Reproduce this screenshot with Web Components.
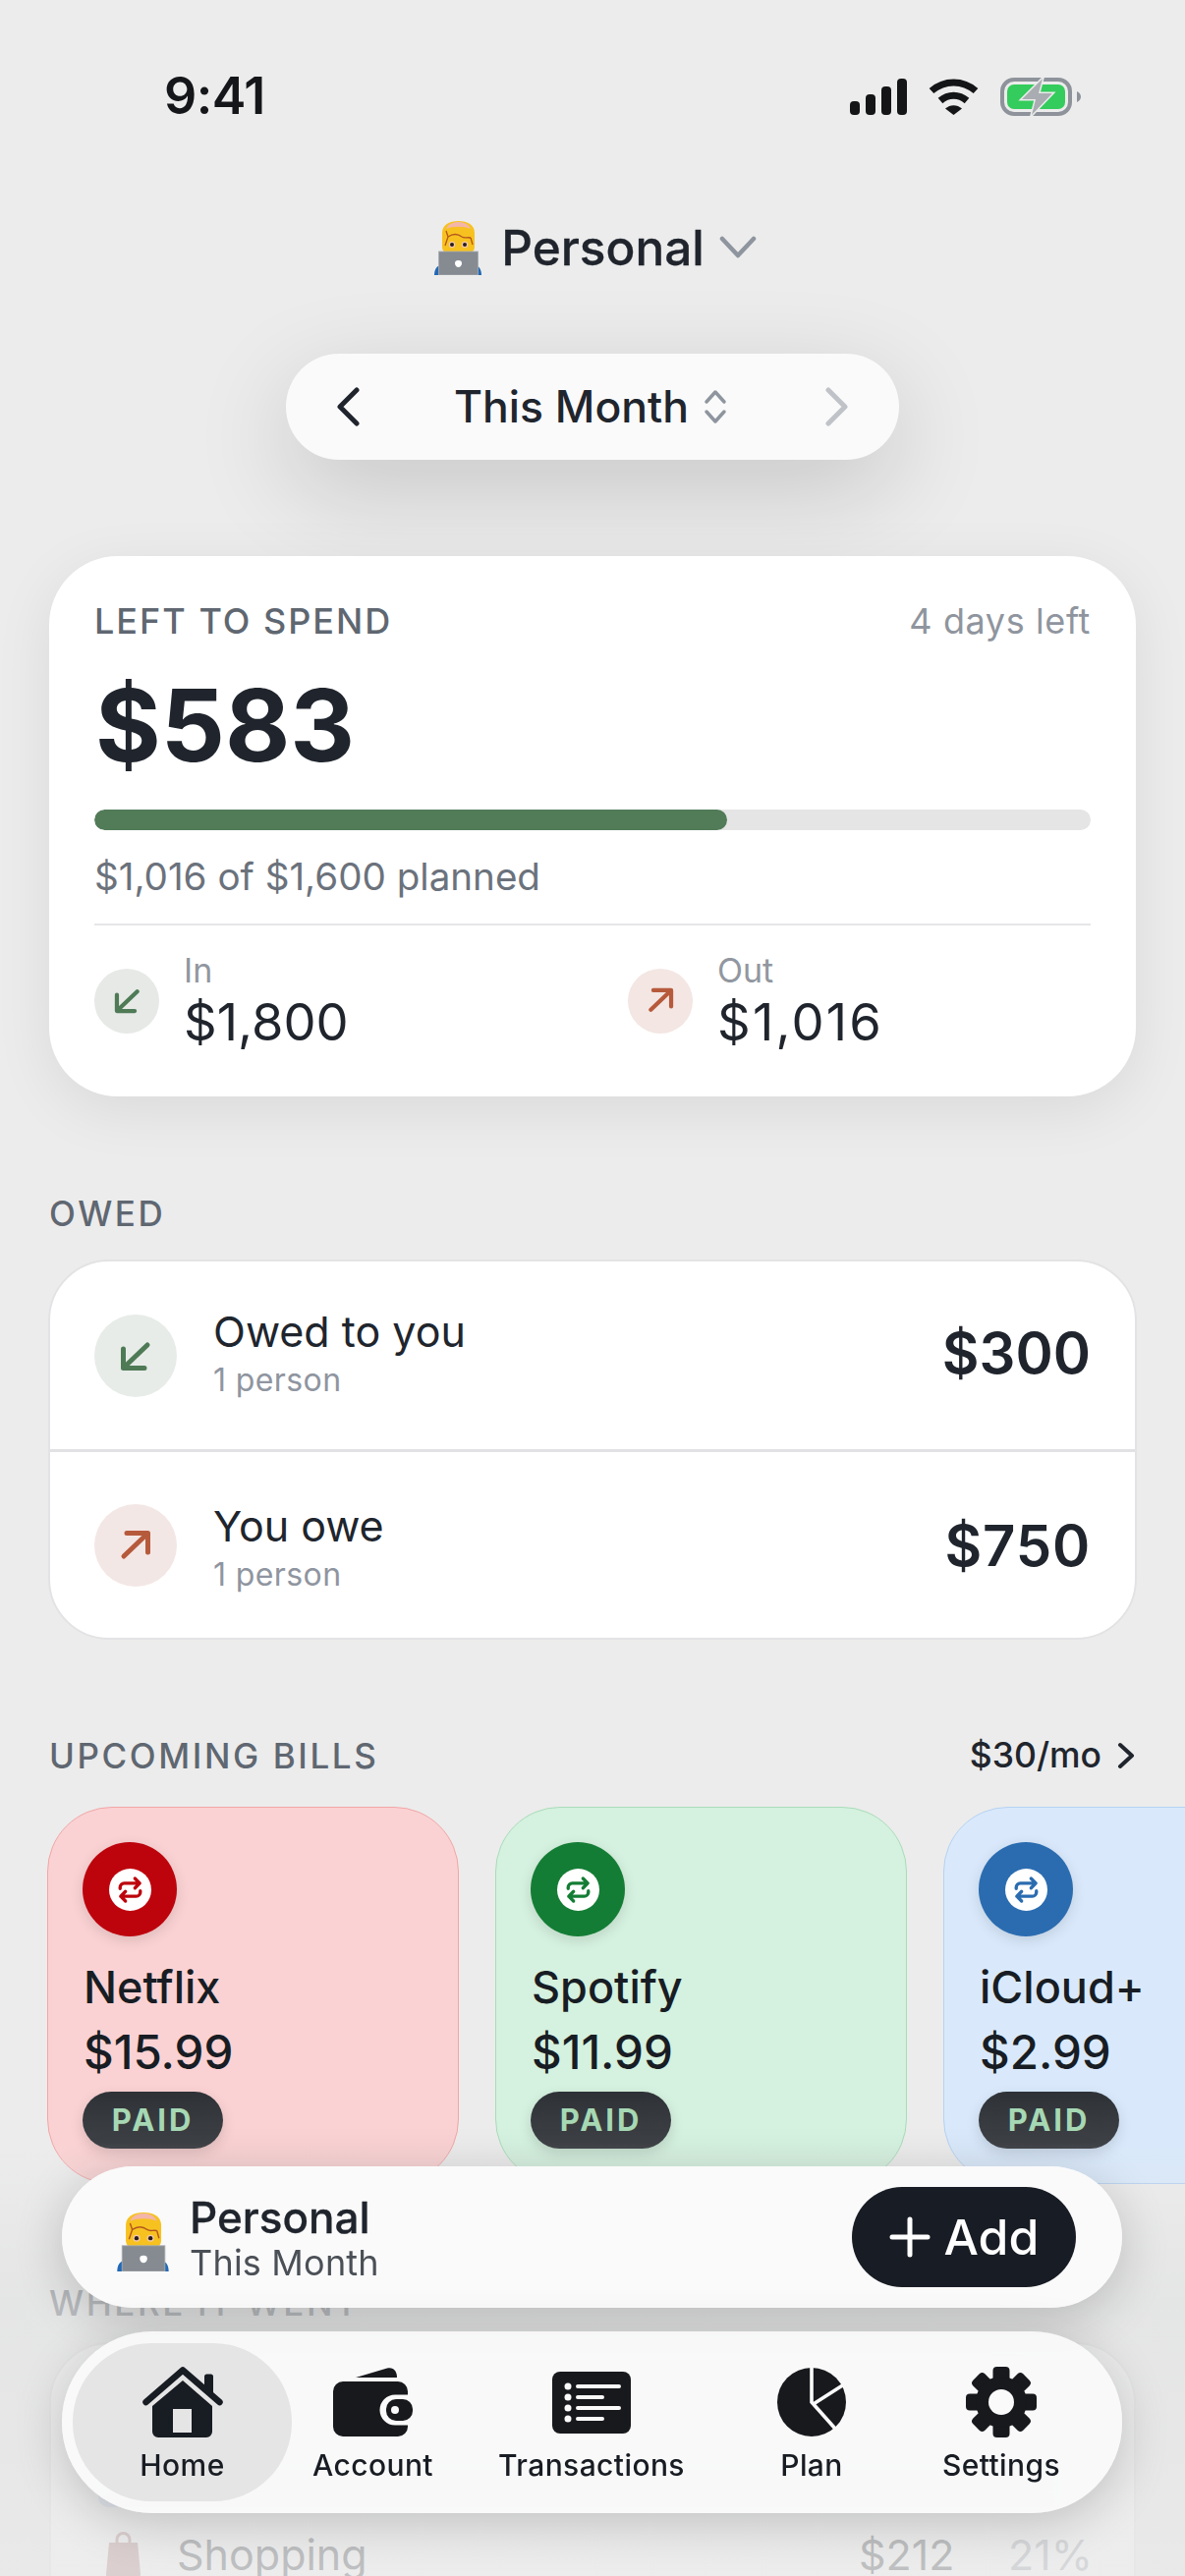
<!DOCTYPE html>
<html lang="en">
<head>
<meta charset="UTF-8">
<title>Budget home</title>
<style>
    html, body { margin: 0; background: #ececec; }
    body { width: 1206px; height: 2622px; overflow: hidden; font-family: Inter, "Noto Sans", sans-serif; color: #20252d; }
</style>
<script>
    const EMOJI = `<svg viewBox="0 0 48 55" width="100%" height="100%">
        <path d="M8 12C8 4 15 0 24.500 0S41 4 41 12V26C41 31 37 34 33 34H16C12 34 8 31 8 26Z" fill="#f7c21f"/>
        <path d="M12 8C14 3 19 1 24.500 1S35 3 37 8C31 5 18 5 12 8Z" fill="#f4b6a8"/>
        <path d="M12 10L14 16C20 12 24 13 28 16C31 18 33 16 37 17M14 16L11 25M37 17L39 24" fill="none" stroke="#b5561f" stroke-width="1.300"/>
        <circle cx="18" cy="24" r="3.200" fill="#f4c9b0"/><circle cx="31" cy="24" r="3.200" fill="#f4c9b0"/>
        <circle cx="18" cy="24" r="2" fill="#2a1d1b"/><circle cx="31" cy="24" r="2" fill="#2a1d1b"/>
        <path d="M0 55C0 50 2 46 6 45V55ZM48 55C48 50 46 46 42 45V55Z" fill="#2268b5"/>
        <rect x="4.500" y="31" width="40" height="24" fill="#868b92" stroke="#a9adb2" stroke-width=".8"/>
        <path d="M24.500 40c2.500 0 3.500 1 3.500 3s-1.500 4-3.500 4-3.500-2-3.500-4 1-3 3.500-3z" fill="#fff"/>
    </svg>`;

    // drawn around 0,0 in px of the large badge
    const ARROWS = {
        in: `<path d="M12 -11L-11 11M-12.500 -7V12.500H9"/>`,
        out: `<path d="M-12 11L11 -11M12.500 7V-12.500H-9"/>`
    };

    const GEAR = Array.from({length: 8}, (_, i) =>
        `<rect x="27.500" y="0" width="17" height="20" rx="4" transform="rotate(${i * 45} 36 36)"/>`).join('');

    const TAB_ICONS = {
        home: `<svg width="82" height="72" viewBox="0 0 82 72"><g fill="#181c23">
            <path d="M63 24V10a2.500 2.500 0 0 1 2.500-2.500h4A2.500 2.500 0 0 1 72 10V30Z"/>
            <path fill-rule="evenodd" d="M41 14L71 40V66a6 6 0 0 1-6 6H16a6 6 0 0 1-6-6V40ZM31 43V67H50V43Z"/></g>
            <path d="M3.500 36L41 3.500L78.500 36" fill="none" stroke="#181c23" stroke-width="6.500" stroke-linecap="round" stroke-linejoin="round"/></svg>`,
        wallet: `<svg width="82" height="70" viewBox="0 0 82 70">
            <path d="M23 10L55 .6C61-1 65 3 65 10Z" fill="#17191d"/>
            <rect x="0" y="14" width="76" height="56" rx="10" fill="#17191d"/>
            <path d="M77 27.500H63a15 15 0 0 0 0 31H77Z" fill="#fafafa"/>
            <rect x="54" y="32" width="27" height="22" rx="10" fill="#17191d"/>
            <circle cx="63" cy="43" r="4" fill="#fafafa"/></svg>`,
        list: `<svg width="80" height="63" viewBox="0 0 80 63">
            <rect width="80" height="63" rx="8" fill="#17191d"/>
            <g fill="#fafafa"><circle cx="16" cy="15" r="3.500"/><circle cx="16" cy="26" r="3.500"/><circle cx="16" cy="37" r="3.500"/><circle cx="16" cy="48" r="3.500"/></g>
            <path d="M26 15H68M26 26H51M26 37H68M26 48H51" stroke="#fafafa" stroke-width="4" stroke-linecap="round"/></svg>`,
        pie: `<svg width="70" height="70" viewBox="-35 -35 70 70">
            <circle r="35" fill="#17191d"/>
            <path d="M0 -36V0L24 27M2.500 1.500L33 -18" fill="none" stroke="#fafafa" stroke-width="3.600"/></svg>`,
        gear: `<svg width="72" height="72" viewBox="0 0 72 72"><g fill="#17191d">${GEAR}<circle cx="36" cy="36" r="26"/></g>
            <circle cx="36" cy="36" r="13" fill="#fafafa"/></svg>`
    };

    class StatusBar extends HTMLElement {
        connectedCallback() {
            this.attachShadow({mode: 'open'}).innerHTML = `
                <style>
                    :host { display: flex; align-items: center; justify-content: space-between; height: 56px; padding: 70px 106px 0 167px; }
                    .t { font: 600 52px/56px Inter, sans-serif; color: #151619; letter-spacing: -.5px; }
                    .i { display: flex; align-items: center; gap: 22px; }
                    svg { display: block; }
                </style>
                <span class="t"><slot></slot></span>
                <div class="i">
                    <svg width="58" height="37" viewBox="0 0 58 37" fill="#141517">
                        <rect x="0" y="23" width="10" height="14" rx="4"/><rect x="16" y="16" width="10" height="21" rx="4"/>
                        <rect x="32" y="8" width="10" height="29" rx="4"/><rect x="48" y="0" width="10" height="37" rx="4"/>
                    </svg>
                    <svg width="51" height="37" viewBox="0 0 51 37" fill="none" stroke="#141517" stroke-width="7">
                        <path d="M3 12.500C16 1 35 1 48 12.500"/><path d="M12 22.500C20 15.500 31 15.500 39 22.500"/>
                        <path d="M17 30.500C22 26 29 26 34 30.500L25.500 37Z" fill="#141517" stroke="none"/>
                    </svg>
                    <svg width="82" height="39" viewBox="0 0 82 39">
                        <rect x="2" y="2" width="69" height="35" rx="12" fill="none" stroke="#8e939b" stroke-width="4"/>
                        <rect x="7" y="7" width="59" height="25" rx="7" fill="#34cc5c"/>
                        <path d="M78 14c2.500 1 4 3 4 5.500s-1.500 4.500-4 5.500Z" fill="#8e939b"/>
                        <path d="M43 1L22 22H36L32 38L53 16H39Z" fill="#a9adb2" stroke="#ececec" stroke-width="3" paint-order="stroke"/>
                    </svg>
                </div>`;
        }
    }

    class AccountSwitch extends HTMLElement {
        connectedCallback() {
            this.attachShadow({mode: 'open'}).innerHTML = `
                <style>
                    :host { display: flex; align-items: center; justify-content: center; gap: 20px; height: 60px; margin-top: 96px; padding-left: 6px; font: 500 49.500px/60px Inter, sans-serif; color: #20252d; -webkit-text-stroke: .3px #20252d; }
                    .e { width: 48px; height: 55px; }
                    svg.c { display: block; margin-left: -5px; }
                </style>
                <span class="e">${EMOJI}</span>
                <span><slot></slot></span>
                <svg class="c" width="38" height="24" viewBox="0 0 38 24" fill="none" stroke="#8e959e" stroke-width="4.500" stroke-linecap="round" stroke-linejoin="round"><path d="M3 3L19 20L35 3"/></svg>`;
        }
    }

    class PeriodPill extends HTMLElement {
        connectedCallback() {
            this.attachShadow({mode: 'open'}).innerHTML = `
                <style>
                    :host { display: flex; align-items: center; box-sizing: border-box; width: 624px; height: 108px; margin: 78px auto 0; padding: 0 51px; border-radius: 54px; background: #fafafa; box-shadow: 0 30px 100px rgba(0,0,0,.16); font: 500 44.500px/60px Inter, sans-serif; }
                    .m { flex: 1; display: flex; align-items: center; justify-content: center; gap: 14px; padding-right: 3px; }
                    svg { display: block; }
                </style>
                <svg width="24" height="40" viewBox="0 0 24 40" fill="none" stroke="#20252d" stroke-width="5" stroke-linecap="round" stroke-linejoin="round"><path d="M21 3L4 20L21 37"/></svg>
                <div class="m"><span><slot></slot></span>
                    <svg width="26" height="36" viewBox="0 0 26 36" fill="none" stroke="#8e959e" stroke-width="3.500" stroke-linecap="round" stroke-linejoin="round"><path d="M4 13L13 3L22 13M4 23L13 33L22 23"/></svg>
                </div>
                <svg width="24" height="40" viewBox="0 0 24 40" fill="none" stroke="#bfc3c8" stroke-width="5" stroke-linecap="round" stroke-linejoin="round"><path d="M3 3L20 20L3 37"/></svg>`;
        }
    }

    class SpendCard extends HTMLElement {
        connectedCallback() {
            this.attachShadow({mode: 'open'}).innerHTML = `
                <style>
                    :host { display: block; box-sizing: border-box; height: 550px; margin-top: 98px; padding: 46px 46px 0; border-radius: 70px; background: #fff; box-shadow: 0 14px 60px rgba(0,0,0,.08); }
                    .top { display: flex; justify-content: space-between; align-items: center; height: 40px; font: 500 36px/40px Inter, sans-serif; color: #5f6771; letter-spacing: 2px; }
                    .left { font-weight: 400; color: #8f959e; letter-spacing: .6px; }
                    .big { font: 700 102px/120px Inter, sans-serif; color: #20252d; margin-top: 26px; letter-spacing: 0; padding-left: 1px; }
                    .bar { height: 21px; margin-top: 26px; border-radius: 11px; background: #e5e5e5; overflow: hidden; }
                    .bar i { display: block; width: 644px; height: 100%; border-radius: 11px; background: #527b58; }
                    .sub { font: 400 38.600px/48px Inter, sans-serif; color: #6b727c; margin-top: 23px; }
                    .rule { height: 2px; background: #e6e6e8; margin-top: 24px; }
                    .stats { display: grid; grid-template-columns: 543px 1fr; margin-top: 27px; }
                </style>
                <div class="top"><span><slot name="label"></slot></span><span class="left"><slot name="left"></slot></span></div>
                <div class="big"><slot name="amount"></slot></div>
                <div class="bar"><i></i></div>
                <div class="sub"><slot name="sub"></slot></div>
                <div class="rule"></div>
                <div class="stats"><slot></slot></div>`;
        }
    }

    class FlowStat extends HTMLElement {
        connectedCallback() {
            const kind = this.getAttribute('kind');
            this.attachShadow({mode: 'open'}).innerHTML = `
                <style>
                    :host { display: flex; align-items: center; gap: 25px; }
                    .c { width: 66px; height: 66px; border-radius: 50%; display: flex; align-items: center; justify-content: center; background: ${kind === 'in' ? '#e6e9e6' : '#f3e6e3'}; }
                    svg { display: block; fill: none; stroke: ${kind === 'in' ? '#4f7a56' : '#b65a3c'}; stroke-width: 5; stroke-linecap: round; stroke-linejoin: round; }
                    .l { font: 400 34px/38px Inter, sans-serif; color: #9197a0; letter-spacing: 0; }
                    .v { font: 400 52.500px/56px Inter, sans-serif; color: #20252d; margin-top: 5px; }
                </style>
                <div class="c"><svg width="27" height="27" viewBox="-16 -16 32 32">${ARROWS[kind]}</svg></div>
                <div><div class="l">${this.getAttribute('label')}</div><div class="v"><slot></slot></div></div>`;
        }
    }

    class SectionHead extends HTMLElement {
        connectedCallback() {
            this.attachShadow({mode: 'open'}).innerHTML = `
                <style>
                    :host { display: flex; align-items: center; justify-content: space-between; height: 40px; font: 500 35px/40px Inter, sans-serif; color: #5f6771; letter-spacing: 2.600px; }
                </style>
                <span><slot></slot></span><slot name="end"></slot>`;
        }
    }

    class OwedCard extends HTMLElement {
        connectedCallback() {
            this.attachShadow({mode: 'open'}).innerHTML = `
                <style>
                    :host { display: block; margin: 27px -1px 0; border: 2px solid #e3e3e5; border-radius: 62px; background: #fff; overflow: hidden; }
                </style>
                <slot></slot>`;
        }
    }

    class OwedRow extends HTMLElement {
        connectedCallback() {
            const kind = this.getAttribute('kind');
            this.attachShadow({mode: 'open'}).innerHTML = `
                <style>
                    :host { display: flex; align-items: center; height: 191px; padding: 0 45px 0 45px; gap: 37px; }
                    :host([divided]) { height: 189px; border-top: 3px solid #e2e2e4; }
                    :host([divided]) .b { margin-top: 3px; }
                    :host([divided]) .v { margin-top: 0; letter-spacing: .8px; }
                    .c { flex: none; width: 84px; height: 84px; border-radius: 50%; display: flex; align-items: center; justify-content: center; background: ${kind === 'in' ? '#e7ece8' : '#f3e7e5'}; }
                    svg { display: block; fill: none; stroke: ${kind === 'in' ? '#4f7a56' : '#b65a3c'}; stroke-width: 5; stroke-linecap: round; stroke-linejoin: round; }
                    .b { flex: 1; margin-top: -6px; }
                    .n { font: 400 43px/52px Inter, sans-serif; color: #20252d; }
                    .s { font: 400 32px/38px Inter, sans-serif; color: #8f95a0; letter-spacing: .4px; margin-top: 5px; }
                    .v { font: 600 58px/70px Inter, sans-serif; color: #20252d; margin-top: -6px; }
                </style>
                <div class="c"><svg width="32" height="32" viewBox="-16 -16 32 32">${ARROWS[kind]}</svg></div>
                <div class="b"><div class="n"><slot name="name"></slot></div><div class="s"><slot name="sub"></slot></div></div>
                <div class="v"><slot></slot></div>`;
        }
    }

    class BillRail extends HTMLElement {
        connectedCallback() {
            this.attachShadow({mode: 'open'}).innerHTML = `
                <style>
                    :host { display: flex; gap: 37px; margin: 32px -50px 0 -2px; overflow: hidden; }
                </style>
                <slot></slot>`;
        }
    }

    class BillCard extends HTMLElement {
        connectedCallback() {
            const tone = this.getAttribute('tone');
            const bright = this.getAttribute('bright');
            const line = this.getAttribute('line');
            this.attachShadow({mode: 'open'}).innerHTML = `
                <style>
                    :host { flex: none; display: block; box-sizing: border-box; width: 419px; height: 384px; padding: 35px 35px 0; border: 1.500px solid ${line}; border-radius: 66px; background: ${tone}; }
                    .d { width: 96px; height: 96px; border-radius: 50%; display: flex; align-items: center; justify-content: center; background: ${bright}; box-shadow: 0 4px 14px rgba(0,0,0,.12); }
                    .w { width: 43px; height: 43px; border-radius: 50%; background: #fff; display: flex; align-items: center; justify-content: center; }
                    svg { display: block; fill: none; stroke: ${bright}; stroke-width: 2.800; stroke-linecap: round; stroke-linejoin: round; }
                    .n { font: 500 45px/54px Inter, sans-serif; color: #181d24; margin: 25px 0 0 1px; }
                    .p { font: 500 47.500px/54px Inter, sans-serif; color: #181d24; margin: 12px 0 0 1px; }
                    .t { display: inline-flex; align-items: center; justify-content: center; box-sizing: border-box; width: 143px; height: 58px; margin-top: 13px; border-radius: 29px; background: linear-gradient(#2e3237, #3f4247); color: #a6d8b4; font: 700 31px/58px Inter, sans-serif; letter-spacing: 3px; box-shadow: 0 5px 14px rgba(0,0,0,.13); }
                </style>
                <div class="d"><div class="w"><svg width="29" height="29" viewBox="0 0 24 24"><path d="M3.500 11V10a3.500 3.500 0 0 1 3.500-3.500H20M16 2.500L20 6.500L16 10.500M20.500 13V14a3.500 3.500 0 0 1-3.500 3.500H4M8 21.500L4 17.500L8 13.500"/></svg></div></div>
                <div class="n"><slot name="name"></slot></div>
                <div class="p"><slot name="price"></slot></div>
                <div class="t"><slot name="tag"></slot></div>`;
        }
    }

    class SpendRow extends HTMLElement {
        connectedCallback() {
            this.attachShadow({mode: 'open'}).innerHTML = `
                <style>
                    :host { display: flex; align-items: center; height: 54px; font: 400 43px/54px Inter, sans-serif; color: #20252d; }
                    .n { flex: 1; margin-left: 37px; }
                    .v { width: 110px; }
                    .p { width: 80px; margin-left: 42px; text-align: right; color: #8f95a0; }
                    svg { display: block; }
                </style>
                <svg width="35" height="48" viewBox="0 0 35 48"><path d="M11 12V9a6.500 6.500 0 0 1 13 0v3" fill="none" stroke="#a86f6f" stroke-width="3"/><path d="M3 12H32L35 44a4 4 0 0 1-4 4H4a4 4 0 0 1-4-4Z" fill="#a86f6f"/></svg>
                <span class="n"><slot name="name"></slot></span>
                <span class="v"><slot name="value"></slot></span>
                <span class="p"><slot name="pct"></slot></span>`;
        }
    }

    class WhereCard extends HTMLElement {
        connectedCallback() {
            this.attachShadow({mode: 'open'}).innerHTML = `
                <style>
                    :host { display: block; box-sizing: border-box; height: 366px; margin-top: 20px; padding: 48px 48px 0 56px; border: 2px solid #e3e3e5; border-radius: 62px; background: #fff; }
                    .g { height: 40px; width: 980px; margin: 78px 0 0 -8px; border-radius: 10px; background: #cfdff8; }
                </style>
                <div class="g"></div>
                <div style="height:21px"></div>
                <slot></slot>`;
        }
    }

    class HomeDock extends HTMLElement {
        connectedCallback() {
            this.attachShadow({mode: 'open'}).innerHTML = `
                <style>
                    :host { position: absolute; left: 63px; right: 64px; bottom: 64px; display: flex; flex-direction: column; gap: 24px; }
                </style>
                <slot></slot>`;
        }
    }

    class AddBar extends HTMLElement {
        connectedCallback() {
            this.attachShadow({mode: 'open'}).innerHTML = `
                <style>
                    :host { display: flex; align-items: center; height: 144px; padding: 0 47px 0 56px; border-radius: 72px; background: rgba(250,250,250,.985); box-shadow: 0 10px 50px rgba(0,0,0,.19); backdrop-filter: blur(16px); }
                    .e { width: 53px; height: 60px; margin: 10px 21px 0 0; }
                    .b { flex: 1; }
                    .n { font: 500 44px/50px Inter, sans-serif; color: #20252d; -webkit-text-stroke: .3px #20252d; }
                    .s { font: 400 36px/40px Inter, sans-serif; color: #4b5057; margin-top: 1px; letter-spacing: .2px; }
                    .a { display: flex; align-items: center; justify-content: center; gap: 14px; width: 228px; height: 102px; border-radius: 51px; background: #181c24; color: #fff; font: 500 50px/60px Inter, sans-serif; }
                    svg { display: block; }
                </style>
                <span class="e">${EMOJI}</span>
                <div class="b"><div class="n"><slot name="name"></slot></div><div class="s"><slot name="sub"></slot></div></div>
                <div class="a"><svg width="42" height="42" viewBox="0 0 42 42" stroke="#fff" stroke-width="5" stroke-linecap="round"><path d="M21 3V39M3 21H39"/></svg><span><slot name="action"></slot></span></div>`;
        }
    }

    class TabBar extends HTMLElement {
        connectedCallback() {
            this.attachShadow({mode: 'open'}).innerHTML = `
                <style>
                    :host { display: grid; grid-template-columns: 223px 165px 280px 168px 218px; height: 185px; box-sizing: border-box; padding: 12px 14px 12px 11px; border-radius: 92px; background: rgba(250,250,250,.88); box-shadow: 0 10px 50px rgba(0,0,0,.19); backdrop-filter: blur(12px); }
                </style>
                <slot></slot>`;
        }
    }

    class TabItem extends HTMLElement {
        connectedCallback() {
            const icon = this.getAttribute('icon');
            const on = this.hasAttribute('active');
            this.attachShadow({mode: 'open'}).innerHTML = `
                <style>
                    :host { display: flex; flex-direction: column; align-items: center; border-radius: 80px; height: 161px; background: ${on ? '#e5e5e5' : 'transparent'}; font: 500 30px/40px Inter, sans-serif; color: #181c23; letter-spacing: .4px; }
                    .i { height: 72px; margin-top: 24px; display: flex; align-items: center; }
                    .l { margin-top: 8px; }
                    svg { display: block; }
                </style>
                <div class="i">${TAB_ICONS[icon]}</div>
                <div class="l"><slot></slot></div>`;
        }
    }

    class BottomVeil extends HTMLElement {
        connectedCallback() {
            this.attachShadow({mode: 'open'}).innerHTML = `
                <style>
                    :host { position: absolute; left: 0; right: 0; bottom: 0; height: 442px; background: linear-gradient(rgba(236,236,236,0), rgba(225,226,226,.68) 37%, rgba(232,232,232,.8)); pointer-events: none; }
                </style>`;
        }
    }

    class AppScreen extends HTMLElement {
        connectedCallback() {
            this.attachShadow({mode: 'open'}).innerHTML = `
                <style>
                    :host { display: block; position: relative; width: 1206px; height: 2622px; overflow: hidden; background: #ececec; }
                </style>
                <slot></slot>`;
        }
    }

    class ScreenBody extends HTMLElement {
        connectedCallback() {
            this.attachShadow({mode: 'open'}).innerHTML = `
                <style>
                    :host { display: block; padding: 0 50px; }
                    ::slotted(.gap-owed) { margin-top: 99px; }
                    ::slotted(.gap-bills) { margin-top: 98px; }
                    ::slotted(.gap-where) { margin-top: 101px; }
                </style>
                <slot></slot>`;
        }
    }

    class BillsTotal extends HTMLElement {
        connectedCallback() {
            this.attachShadow({mode: 'open'}).innerHTML = `
                <style>
                    :host { display: flex; align-items: center; gap: 15px; font: 500 35.500px/40px Inter, sans-serif; color: #20252d; letter-spacing: 0; }
                    svg { display: block; }
                </style>
                <span><slot></slot></span>
                <svg width="20" height="28" viewBox="0 0 20 28" fill="none" stroke="#20252d" stroke-width="4" stroke-linecap="round" stroke-linejoin="round"><path d="M4 3L16 14L4 25"/></svg>`;
        }
    }

    customElements.define('status-bar', StatusBar);
    customElements.define('account-switch', AccountSwitch);
    customElements.define('period-pill', PeriodPill);
    customElements.define('spend-card', SpendCard);
    customElements.define('flow-stat', FlowStat);
    customElements.define('section-head', SectionHead);
    customElements.define('owed-card', OwedCard);
    customElements.define('owed-row', OwedRow);
    customElements.define('bill-rail', BillRail);
    customElements.define('bill-card', BillCard);
    customElements.define('spend-row', SpendRow);
    customElements.define('where-card', WhereCard);
    customElements.define('home-dock', HomeDock);
    customElements.define('add-bar', AddBar);
    customElements.define('tab-bar', TabBar);
    customElements.define('tab-item', TabItem);
    customElements.define('bottom-veil', BottomVeil);
    customElements.define('app-screen', AppScreen);
    customElements.define('screen-body', ScreenBody);
    customElements.define('bills-total', BillsTotal);
</script>
</head>
<body>
    <app-screen>
        <status-bar>9:41</status-bar>
        <account-switch>Personal</account-switch>
        <period-pill>This Month</period-pill>
        <screen-body>
            <spend-card>
                <span slot="label">LEFT TO SPEND</span>
                <span slot="left">4 days left</span>
                <span slot="amount">$583</span>
                <span slot="sub">$1,016 of $1,600 planned</span>
                <flow-stat kind="in" label="In">$1,800</flow-stat>
                <flow-stat kind="out" label="Out" style="letter-spacing: 2.200px">$1,016</flow-stat>
            </spend-card>
            <section-head class="gap-owed">OWED</section-head>
            <owed-card>
                <owed-row kind="in"><span slot="name">Owed to you</span><span slot="sub">1 person</span>$300</owed-row>
                <owed-row kind="out" divided><span slot="name">You owe</span><span slot="sub">1 person</span>$750</owed-row>
            </owed-card>
            <section-head class="gap-bills">UPCOMING BILLS<bills-total slot="end">$30/mo</bills-total></section-head>
            <bill-rail>
                <bill-card tone="#fad2d3" line="#f2a6a6" bright="#bd040d"><span slot="name">Netflix</span><span slot="price">$15.99</span><span slot="tag">PAID</span></bill-card>
                <bill-card tone="#d5f1df" line="#a9dcb9" bright="#147d35"><span slot="name">Spotify</span><span slot="price">$11.99</span><span slot="tag">PAID</span></bill-card>
                <bill-card tone="#d9e9fb" line="#b5d2f2" bright="#2b6cb0"><span slot="name">iCloud+</span><span slot="price">$2.99</span><span slot="tag">PAID</span></bill-card>
            </bill-rail>
            <section-head class="gap-where">WHERE IT WENT</section-head>
            <where-card>
                <spend-row><span slot="name">Shopping</span><span slot="value">$212</span><span slot="pct">21%</span></spend-row>
            </where-card>
        </screen-body>
        <bottom-veil></bottom-veil>
        <home-dock>
            <add-bar><span slot="name">Personal</span><span slot="sub">This Month</span><span slot="action">Add</span></add-bar>
            <tab-bar>
                <tab-item icon="home" active>Home</tab-item>
                <tab-item icon="wallet">Account</tab-item>
                <tab-item icon="list">Transactions</tab-item>
                <tab-item icon="pie">Plan</tab-item>
                <tab-item icon="gear">Settings</tab-item>
            </tab-bar>
        </home-dock>
    </app-screen>
</body>
</html>
